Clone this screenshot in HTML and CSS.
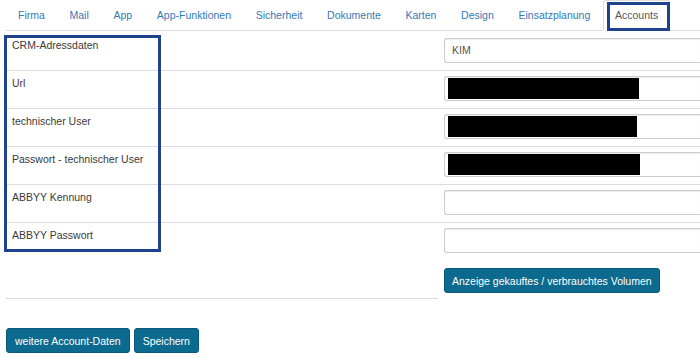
FILE: index.html
```html
<!DOCTYPE html>
<html lang="de">
<head>
  <meta charset="UTF-8" />
  <meta name="viewport" content="width=device-width, initial-scale=1.0"/>
  <title>Accounts</title>
  <link rel="stylesheet" href="styles.css">
</head>
<body>
  <div class="page">
    <ul class="tabs">
      <li><a href="#">Firma</a></li>
      <li><a href="#">Mail</a></li>
      <li><a href="#">App</a></li>
      <li><a href="#">App-Funktionen</a></li>
      <li><a href="#">Sicherheit</a></li>
      <li><a href="#">Dokumente</a></li>
      <li><a href="#">Karten</a></li>
      <li><a href="#">Design</a></li>
      <li><a href="#">Einsatzplanung</a></li>
      <li class="active"><a href="#">Accounts</a></li>
    </ul>

    <div class="form">
      <div class="row first">
        <div class="label">CRM-Adressdaten</div>
        <div class="value"><div class="field">KIM</div></div>
      </div>
      <div class="row">
        <div class="label">Url</div>
        <div class="value"><div class="field"><span class="redacted w191"></span></div></div>
      </div>
      <div class="row">
        <div class="label">technischer User</div>
        <div class="value"><div class="field"><span class="redacted w189"></span></div></div>
      </div>
      <div class="row">
        <div class="label">Passwort - technischer User</div>
        <div class="value"><div class="field"><span class="redacted w192"></span></div></div>
      </div>
      <div class="row">
        <div class="label">ABBYY Kennung</div>
        <div class="value"><div class="field"></div></div>
      </div>
      <div class="row">
        <div class="label">ABBYY Passwort</div>
        <div class="value"><div class="field"></div></div>
      </div>
      <div class="row action">
        <div class="label spacer"></div>
        <div class="value"><button class="btn">Anzeige gekauftes / verbrauchtes Volumen</button></div>
      </div>
    </div>

    <div class="actions">
      <button class="btn">weitere Account-Daten</button>
      <button class="btn">Speichern</button>
    </div>

    <!-- highlight frames drawn over the screenshot -->
    <div class="mark mark-labels"></div>
    <div class="mark mark-tab"></div>
  </div>
</body>
</html>
```

FILE: styles.css
```css
html,
body {
  margin: 0;
  padding: 0;
  overflow: hidden;
  background-color: #fff;
}

body {
  font-family: "Liberation Sans", Arial, sans-serif;
  font-size: 10.5px;
  line-height: 15px;
  color: #3a3a3a;
}

.page {
  position: relative;
  padding-left: 6px;
  height: 357px;
}

/* tabs */

.tabs {
  display: flex;
  list-style: none;
  margin: 0;
  padding: 0;
  border-bottom: 1px solid #ddd;
  white-space: nowrap;
}

.tabs li {
  margin-right: 0.7px;
  margin-bottom: -1px;
}

.tabs a {
  display: block;
  padding: 7px 11px;
  border: 1px solid transparent;
  border-radius: 3px 3px 0 0;
  color: #337ab7;
  text-decoration: none;
}

.tabs .active a {
  color: #555;
  background-color: #fff;
  border-color: #ddd #ddd transparent;
}

/* form rows */

.row {
  display: flex;
  border-top: 1px solid #ddd;
}

.row.first {
  border-top: none;
}

.label {
  width: 420px;
  flex-shrink: 0;
  padding: 5px 6px 7px;
}

.value {
  flex: 1;
  min-width: 0;
  padding: 5px 0 7px 6px;
}

.row.first .label,
.row.first .value {
  padding-top: 7px;
}

/* the input runs on past the right edge of the window */
.field {
  display: flex;
  align-items: center;
  box-sizing: border-box;
  width: 100%;
  height: 25px;
  padding: 0 7px;
  border: 1px solid #ccc;
  border-right: none;
  border-radius: 3px 0 0 3px;
  box-shadow: inset 0 1px 1px rgba(0, 0, 0, 0.075);
  color: #555;
}

.field .redacted {
  display: block;
  height: 21px;
  margin-left: -4px;
  background-color: #000;
}

.w189 { width: 189px; }
.w191 { width: 191px; }
.w192 { width: 192px; }

.row.action {
  border-top: none;
}

.row.action .label {
  height: 26px;
  border-bottom: 1px solid #ddd;
}

.row.action .value {
  padding-top: 8px;
}

/* buttons */

.btn {
  display: inline-block;
  height: 25px;
  padding: 0 7px;
  font-family: "Liberation Sans", Arial, sans-serif;
  font-size: 10.5px;
  color: #fff;
  background-color: #0b6a8e;
  border: 1px solid #095a79;
  border-radius: 3px;
  cursor: pointer;
  white-space: nowrap;
}

.actions {
  display: flex;
  gap: 4px;
  margin-top: 28px;
}

.actions .btn {
  padding: 0 8px;
}

/* highlight frames */

.mark {
  position: absolute;
  border: 3px solid #1f428f;
  box-sizing: border-box;
  pointer-events: none;
}

.mark-labels {
  left: 4px;
  top: 35px;
  width: 157px;
  height: 217px;
}

.mark-tab {
  left: 607px;
  top: 2px;
  width: 63px;
  height: 29px;
}
```
